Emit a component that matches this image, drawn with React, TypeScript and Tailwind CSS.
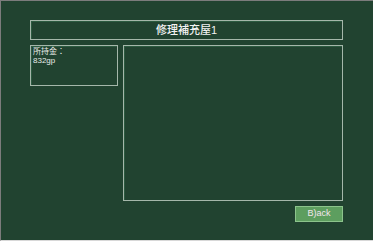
export default function App() {
  const frame = 'border border-[#a5b7aa] shadow-[inset_1px_1px_0_#2c5a40]';
  return (
    <div
      className="w-[373px] h-[241px] bg-[#214330] border-t border-l border-b border-t-[#7c7c7c] border-l-[#7c7c7c] border-b-[#d8d8d8] overflow-hidden"
      style={{ fontFamily: '"Liberation Sans", "Noto Sans CJK JP", sans-serif' }}
    >
      <div className="ml-[29px] mt-[19px] w-[313px] flex flex-col gap-[5px]">
        <div className={`${frame} h-[20px] flex items-center justify-center text-[11px] font-medium text-[#f2f2f2]`}>
          修理補充屋1
        </div>
        <div className="flex gap-[5px] items-start">
          <div className={`${frame} w-[88px] h-[41px] px-[2px] pt-[1px] text-[8px] leading-[9px] text-[#e8ece8]`}>
            <div>所持金：</div>
            <div>832gp</div>
          </div>
          <div className={`${frame} w-[220px] h-[156px]`} />
        </div>
        <div className="flex justify-end">
          <div className="w-[48px] h-[16px] bg-[#5d9e5f] border border-[#8cc48c] flex items-center justify-center text-[9px] text-[#f3e6ee]">
            B)ack
          </div>
        </div>
      </div>
    </div>
  );
}
